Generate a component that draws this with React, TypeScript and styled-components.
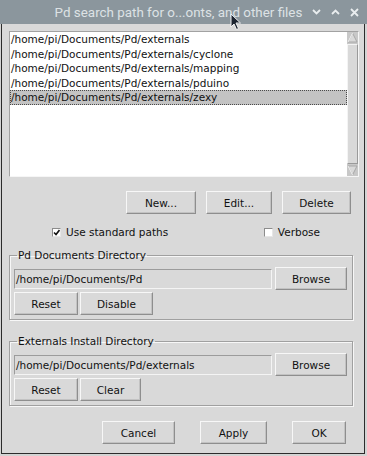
import styled, { createGlobalStyle } from "styled-components";

const GlobalStyle = createGlobalStyle`
  html, body {
    margin: 0;
    padding: 0;
    background: #d4d4d4;
  }
  body {
    width: 367px;
    height: 456px;
    overflow: hidden;
    font-family: "DejaVu Sans", sans-serif;
    font-size: 10.5px;
    color: #111;
  }
`;

const paths = [
  "/home/pi/Documents/Pd/externals",
  "/home/pi/Documents/Pd/externals/cyclone",
  "/home/pi/Documents/Pd/externals/mapping",
  "/home/pi/Documents/Pd/externals/pduino",
  "/home/pi/Documents/Pd/externals/zexy",
];

export default function App() {
  // выбранная строка в списке путей
  const selected = 4;

  return (
    <Screen>
      <GlobalStyle />
      <TitleBar>
        <span />
        <Title>Pd search path for o...onts, and other files</Title>
        <WinControls>
          <svg width="9" height="6" viewBox="0 0 9 6">
            <polyline points="1,1 4.5,4.5 8,1" fill="none" stroke="#e9edef" strokeWidth="1.8" />
          </svg>
          <svg width="9" height="6" viewBox="0 0 9 6">
            <polyline points="1,5 4.5,1.5 8,5" fill="none" stroke="#e9edef" strokeWidth="1.8" />
          </svg>
          <svg width="9" height="9" viewBox="0 0 9 9">
            <path d="M1 1 L8 8 M8 1 L1 8" stroke="#e9edef" strokeWidth="1.8" />
          </svg>
        </WinControls>
      </TitleBar>

      <Body>
        <ListBox>
          <ListItems>
            {paths.map((p, i) => (
              <Row key={p} selected={i === selected}>{p}</Row>
            ))}
          </ListItems>
          <ScrollBar>
            <ArrowBtn>
              <svg width="11" height="11" viewBox="0 0 11 11">
                <polygon points="5.5,1 10,10 1,10" fill="#d9d9d9" stroke="#a8a8a8" />
                <polyline points="1,10 5.5,1" fill="none" stroke="#f4f4f4" />
              </svg>
            </ArrowBtn>
            <Slider />
            <ArrowBtn>
              <svg width="11" height="11" viewBox="0 0 11 11">
                <polygon points="1,1 10,1 5.5,10" fill="#d9d9d9" stroke="#a8a8a8" />
                <polyline points="1,1 5.5,10" fill="none" stroke="#f4f4f4" />
              </svg>
            </ArrowBtn>
          </ScrollBar>
        </ListBox>

        <ButtonRow width={342} gap={10} top={14}>
          <Btn w={70}>New...</Btn>
          <Btn w={66}>Edit...</Btn>
          <Btn w={69}>Delete</Btn>
        </ButtonRow>

        <CheckRow>
          <Check>
            <Box>
              <svg width="7" height="7" viewBox="0 0 7 7">
                <polyline points="1,3.5 3,5.5 6.5,1" fill="none" stroke="#111" strokeWidth="1.6" />
              </svg>
            </Box>
            Use standard paths
          </Check>
          <Check>
            <Box />
            Verbose
          </Check>
        </CheckRow>

        <Group top={8}>
          <Legend>Pd Documents Directory</Legend>
          <FieldRow>
            <Entry>/home/pi/Documents/Pd</Entry>
            <Btn w={72}>Browse</Btn>
          </FieldRow>
          <SubRow>
            <Btn w={64}>Reset</Btn>
            <Btn w={73}>Disable</Btn>
          </SubRow>
        </Group>

        <Group top={14}>
          <Legend>Externals Install Directory</Legend>
          <FieldRow>
            <Entry>/home/pi/Documents/Pd/externals</Entry>
            <Btn w={72}>Browse</Btn>
          </FieldRow>
          <SubRow>
            <Btn w={64}>Reset</Btn>
            <Btn w={61}>Clear</Btn>
          </SubRow>
        </Group>

        <ButtonRow width={337} gap={25} top={15}>
          <Btn w={73}>Cancel</Btn>
          <Btn w={67}>Apply</Btn>
          <Btn w={54}>OK</Btn>
        </ButtonRow>
      </Body>

      <Cursor width="12" height="18" viewBox="0 0 12 18">
        <path d="M1 1 L1 14 L4 11 L6.5 16.5 L8.5 15.5 L6 10 L10.5 10 Z" fill="#1c2430" stroke="#f2f2f2" strokeWidth="1" />
      </Cursor>
    </Screen>
  );
}

interface RowProps {
  selected?: boolean;
}

// Весь экран
const Screen = styled.div`
  position: relative;
  width: 367px;
  height: 456px;
  display: flex;
  flex-direction: column;
`;

// Заголовок окна
const TitleBar = styled.div`
  height: 24px;
  background: #8b969d;
  display: grid;
  grid-template-columns: minmax(0, 1fr) auto minmax(0, 1fr);
  align-items: center;
`;

const Title = styled.div`
  font-family: Roboto, "Liberation Sans", sans-serif;
  font-size: 13.4px;
  color: #dde2e5;
  white-space: nowrap;
  margin-left: -10px;
`;

const WinControls = styled.div`
  display: flex;
  justify-content: flex-end;
  align-items: center;
  gap: 10px;
  padding-right: 8px;
`;

// Тело диалога
const Body = styled.div`
  height: 429px;
  margin-left: 1px;
  background: #d9d9d9;
  border: 1px solid #2c2c2c;
  border-top: none;
  display: flex;
  flex-direction: column;
  padding-left: 7px;
  box-sizing: content-box;
  width: 355px;
`;

// Список путей со скроллом
const ListBox = styled.div`
  margin-top: 7px;
  width: 350px;
  height: 146px;
  box-sizing: border-box;
  display: flex;
  border: 1px solid;
  border-color: #a2a2a2 #f6f6f6 #f6f6f6 #a2a2a2;
`;

const ListItems = styled.div`
  flex: 1;
  background: #fff;
`;

const Row = styled.div<RowProps>`
  height: 14.5px;
  line-height: 14.5px;
  box-sizing: border-box;
  padding-left: 1px;
  white-space: nowrap;
  background: ${p => (p.selected ? "#c3c3c3" : "transparent")};
  outline: ${p => (p.selected ? "1px dotted #4a4a4a" : "none")};
  outline-offset: -1px;
`;

const ScrollBar = styled.div`
  width: 11px;
  display: flex;
  flex-direction: column;
  background: #c8c8c8;
`;

const ArrowBtn = styled.div`
  height: 11px;
  display: flex;
`;

const Slider = styled.div`
  flex: 1;
  background: #d9d9d9;
  border: 1px solid;
  border-color: #f4f4f4 #9a9a9a #9a9a9a #f4f4f4;
  margin: 1px 0;
`;

// Ряд кнопок
const ButtonRow = styled.div<{ width: number; gap: number; top: number }>`
  width: ${p => p.width}px;
  margin-top: ${p => p.top}px;
  display: flex;
  justify-content: flex-end;
  gap: ${p => p.gap}px;
`;

const Btn = styled.div<{ w: number }>`
  width: ${p => p.w}px;
  height: 23px;
  box-sizing: border-box;
  display: flex;
  align-items: center;
  justify-content: center;
  background: #d9d9d9;
  border: 1px solid;
  border-color: #f7f7f7 #8e8e8e #8e8e8e #f7f7f7;
  box-shadow: inset -1px -1px 0 #c2c2c2;
  white-space: nowrap;
`;

// Чекбоксы
const CheckRow = styled.div`
  margin-top: 10px;
  height: 16px;
  display: flex;
  align-items: center;
  justify-content: space-between;
  padding: 0 44px 0 43px;
`;

const Check = styled.div`
  display: flex;
  align-items: center;
  gap: 5px;
  white-space: nowrap;
`;

const Box = styled.div`
  width: 9px;
  height: 9px;
  box-sizing: border-box;
  background: #fff;
  border: 1px solid;
  border-color: #8c8c8c #e6e6e6 #e6e6e6 #8c8c8c;
  display: flex;
  align-items: center;
  justify-content: center;
`;

// Рамка с заголовком
const Group = styled.fieldset<{ top: number }>`
  margin: ${p => p.top}px 0 0 0;
  width: 344px;
  box-sizing: border-box;
  padding: 5px 5px 4px 4px;
  border: 1px solid #a0a0a0;
  box-shadow: inset 1px 1px 0 #f7f7f7, 1px 1px 0 #f7f7f7;
  min-width: 0;
`;

const Legend = styled.legend`
  padding: 0 1px;
  margin-left: 3px;
  line-height: 14px;
`;

const FieldRow = styled.div`
  display: flex;
  align-items: center;
  gap: 3px;
`;

const Entry = styled.div`
  flex: 1;
  height: 20px;
  box-sizing: border-box;
  line-height: 18px;
  padding-left: 1px;
  background: #d9d9d9;
  border: 1px solid;
  border-color: #9c9c9c #f4f4f4 #f4f4f4 #9c9c9c;
  white-space: nowrap;
`;

const SubRow = styled.div`
  margin-top: 2px;
  display: flex;
  gap: 2px;
`;

// Курсор мыши поверх заголовка
const Cursor = styled.svg`
  position: absolute;
  left: 230px;
  top: 13px;
`;
